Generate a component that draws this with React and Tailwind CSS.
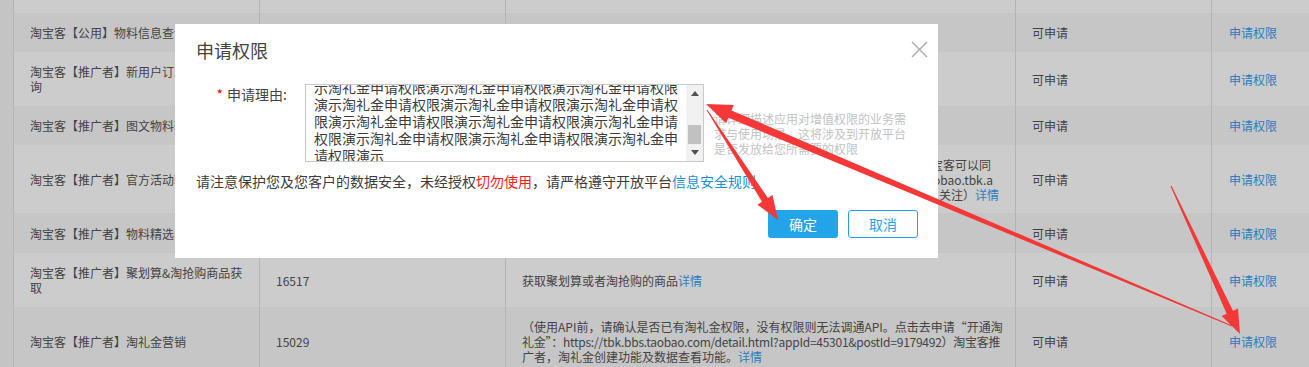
const rows = [
  { h: 13, dark: false },
  { h: 39, dark: true, name: '淘宝客【公用】物料信息查询' },
  {
    h: 54,
    dark: false,
    name: (
      <>
        淘宝客【推广者】新用户订单明细查
        <br />询
      </>
    ),
  },
  { h: 39, dark: true, name: '淘宝客【推广者】图文物料输出' },
  {
    h: 68,
    dark: false,
    name: '淘宝客【推广者】官方活动转链',
    desc: (
      <div className="text-right">
        <div className="pr-[8px]">淘宝客可以同</div>
        <div className="pr-[6px]">taobao.tbk.a</div>
        <div>
          关注）<span className="text-[#349ef0]">详情</span>
        </div>
      </div>
    ),
  },
  { h: 40, dark: true, name: '淘宝客【推广者】物料精选' },
  {
    h: 54,
    dark: false,
    name: (
      <>
        淘宝客【推广者】聚划算&amp;淘抢购商品获
        <br />取
      </>
    ),
    id: '16517',
    desc: (
      <>
        获取聚划算或者淘抢购的商品<span className="text-[#349ef0]">详情</span>
      </>
    ),
  },
  {
    h: 68,
    dark: true,
    name: '淘宝客【推广者】淘礼金营销',
    id: '15029',
    desc: (
      <>
        <div>（使用API前，请确认是否已有淘礼金权限，没有权限则无法调通API。点击去申请“开通淘</div>
        <div className="tracking-[-0.25px]">
          礼金”：https://tbk.bbs.taobao.com/detail.html?appId=45301&amp;postId=9179492）淘宝客推
        </div>
        <div>
          广者，淘礼金创建功能及数据查看功能。<span className="text-[#349ef0]">详情</span>
        </div>
      </>
    ),
  },
];

function arrowPoints(tail, head, w0, w1, hl, hw) {
  const [tx, ty] = tail;
  const [hx, hy] = head;
  const len = Math.hypot(hx - tx, hy - ty);
  const ux = (hx - tx) / len;
  const uy = (hy - ty) / len;
  const nx = -uy;
  const ny = ux;
  const bx = hx - ux * hl;
  const by = hy - uy * hl;
  const pts = [
    [tx + (nx * w0) / 2, ty + (ny * w0) / 2],
    [bx + (nx * w1) / 2, by + (ny * w1) / 2],
    [bx + (nx * hw) / 2, by + (ny * hw) / 2],
    [hx, hy],
    [bx - (nx * hw) / 2, by - (ny * hw) / 2],
    [bx - (nx * w1) / 2, by - (ny * w1) / 2],
    [tx - (nx * w0) / 2, ty - (ny * w0) / 2],
  ];
  return pts.map((p) => p.map((v) => v.toFixed(1)).join(',')).join(' ');
}

const arrows = [
  { tail: [1232, 326], head: [706, 104], w0: 1, w1: 8, hl: 26, hw: 20 },
  { tail: [1171, 186], head: [1240, 334], w0: 1, w1: 7, hl: 24, hw: 18 },
  { tail: [707, 110], head: [778, 220], w0: 1, w1: 7, hl: 24, hw: 18 },
];

const reason = [
  '示淘礼金申请权限演示淘礼金申请权限演示淘礼金申请权限',
  '演示淘礼金申请权限演示淘礼金申请权限演示淘礼金申请权',
  '限演示淘礼金申请权限演示淘礼金申请权限演示淘礼金申请',
  '权限演示淘礼金申请权限演示淘礼金申请权限演示淘礼金申',
  '请权限演示',
];

function TableBg() {
  return (
    <div className="flex h-full">
      {/* left strip */}
      <div className="w-[14px] shrink-0 bg-[#f5f5f5] border-r border-[#e2e2e2]" />
      <div className="flex-1 flex flex-col">
        {rows.map((r, i) => (
          <div
            key={i}
            className={`flex shrink-0 text-[12px] leading-[15px] text-[#555] ${r.dark ? 'bg-[#f8f8f8]' : 'bg-white'}`}
            style={{ height: r.h }}
          >
            <div className="w-[245px] flex items-center pl-[16px] pr-[14px] whitespace-nowrap overflow-hidden">
              {r.name}
            </div>
            <div className="w-[246px] border-l border-[#e2e2e2] flex items-center px-[16px]">{r.id}</div>
            <div className="w-[510px] border-l border-[#e2e2e2] flex items-center px-[16px] whitespace-nowrap overflow-hidden">
              <div className="w-full">{r.desc}</div>
            </div>
            <div className="w-[196px] border-l border-[#e2e2e2] flex items-center px-[16px]">
              {r.name ? '可申请' : ''}
            </div>
            <div className="flex-1 border-l border-[#e2e2e2] flex items-center px-[17px] text-[#349ef0]">
              {r.name ? '申请权限' : ''}
            </div>
          </div>
        ))}
      </div>
    </div>
  );
}

function Tri({ down }) {
  return (
    <svg width="8" height="5" viewBox="0 0 8 5">
      <polygon points={down ? '0,0 8,0 4,5' : '0,5 8,5 4,0'} fill="#505050" />
    </svg>
  );
}

function Modal() {
  return (
    <div className="absolute left-[175px] top-[24px] w-[763px] h-[234px] bg-white flex flex-col pl-[21px] pr-[20px] pb-[20px]">
      <div className="flex items-center justify-between pt-[14px] -mr-[10px]">
        <div className="text-[18px] leading-[24px] text-[#444]">申请权限</div>
        <svg width="17" height="17" viewBox="0 0 17 17" className="mt-[-1px]">
          <path d="M1 1 L16 16 M16 1 L1 16" stroke="#a8a8a8" strokeWidth="1.4" fill="none" />
        </svg>
      </div>

      <div className="flex mt-[22px]">
        <div className="w-[109px] shrink-0 text-right pr-[18px] text-[14px] leading-[20px] text-[#444]">
          <span className="text-[#f00] mr-[4px]">*</span>申请理由:
        </div>
        <div className="w-[399px] h-[78px] border border-[#c9c9c9] flex shrink-0">
          <div className="flex-1 overflow-hidden pl-[8px] flex flex-col justify-end">
            <div className="-mb-[3px] text-[14px] leading-[17px] text-[#3c3c3c] whitespace-nowrap">
              {reason.map((l, i) => (
                <div key={i}>{l}</div>
              ))}
            </div>
          </div>
          <div className="w-[17px] bg-[#f1f1f1] flex flex-col">
            <div className="h-[17px] flex items-center justify-center">
              <Tri />
            </div>
            <div className="flex-1 flex flex-col justify-end">
              <div className="h-[19px] mx-[2px] bg-[#c1c1c1]" />
            </div>
            <div className="h-[17px] flex items-center justify-center">
              <Tri down />
            </div>
          </div>
        </div>
        <div className="ml-[10px] mt-[27px] w-[194px] text-[12px] leading-[15px] text-[#c2c2c2]">
          请详细描述应用对增值权限的业务需求与使用场景，这将涉及到开放平台是否发放给您所需要的权限
        </div>
      </div>

      <div className="mt-[9px] text-[14px] leading-[20px] text-[#3c3c3c]">
        请注意保护您及您客户的数据安全，未经授权<span className="text-[#ff1a1a]">切勿使用</span>
        ，请严格遵守开放平台<span className="text-[#1a8fd8]">信息安全规则</span>
      </div>

      <div className="mt-auto flex justify-end gap-[10px]">
        <button className="w-[70px] h-[28px] rounded-[3px] bg-[#23a4e9] text-white text-[14px]">确定</button>
        <button className="w-[70px] h-[28px] rounded-[3px] border border-[#23a4e9] bg-white text-[#23a4e9] text-[14px]">
          取消
        </button>
      </div>
    </div>
  );
}

export default function App() {
  return (
    <div className="relative w-[1309px] h-[367px] overflow-hidden bg-white font-['Noto_Sans_CJK_SC','Microsoft_YaHei',sans-serif]">
      <TableBg />
      {/* mask */}
      <div className="absolute inset-0 bg-black/20" />
      <Modal />
      {/* annotation arrows */}
      <svg className="absolute inset-0 pointer-events-none" width="1309" height="367" viewBox="0 0 1309 367">
        {arrows.map((a, i) => (
          <polygon key={i} points={arrowPoints(a.tail, a.head, a.w0, a.w1, a.hl, a.hw)} fill="#f43838" />
        ))}
      </svg>
    </div>
  );
}
